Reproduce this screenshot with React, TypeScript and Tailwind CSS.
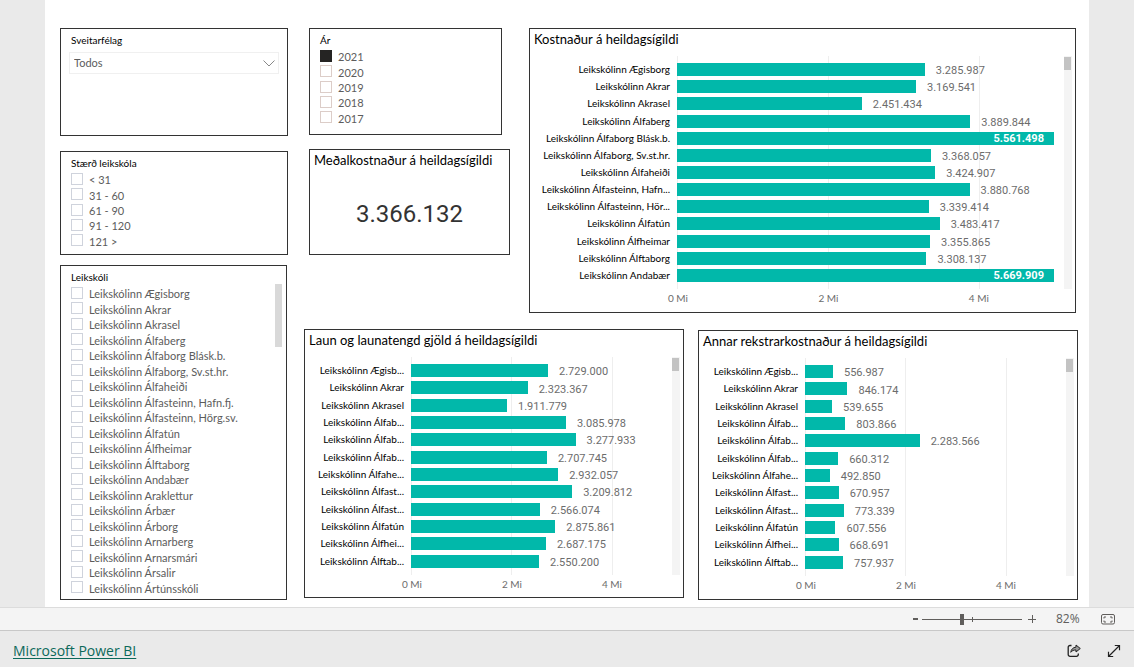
import React, { FC } from 'react';

interface IRow {
  label: string,
  value: number,
}

type TypeSlicer = {
  title: string
  options: string[],
  checked?: string,
  listClass: string,
  boxClass?: string,
  className?: string,
  scroll?: boolean
};

type TypeChart = {
  title: string
  rows: IRow[],
  labelClass: string,
  rowsClass: string,
  className?: string,
};

const AXIS_MAX = 5000000;

const sizes = ['< 31', '31 - 60', '61 - 90', '91 - 120', '121 >'];
const years = ['2021', '2020', '2019', '2018', '2017'];
const schools = [
  'Leikskólinn Ægisborg',
  'Leikskólinn Akrar',
  'Leikskólinn Akrasel',
  'Leikskólinn Álfaberg',
  'Leikskólinn Álfaborg Blásk.b.',
  'Leikskólinn Álfaborg, Sv.st.hr.',
  'Leikskólinn Álfaheiði',
  'Leikskólinn Álfasteinn, Hafn.fj.',
  'Leikskólinn Álfasteinn, Hörg.sv.',
  'Leikskólinn Álfatún',
  'Leikskólinn Álfheimar',
  'Leikskólinn Álftaborg',
  'Leikskólinn Andabær',
  'Leikskólinn Araklettur',
  'Leikskólinn Árbær',
  'Leikskólinn Árborg',
  'Leikskólinn Arnarberg',
  'Leikskólinn Arnarsmári',
  'Leikskólinn Ársalir',
  'Leikskólinn Ártúnsskóli',
];

const totalCost: IRow[] = [
  { label: 'Leikskólinn Ægisborg', value: 3285987 },
  { label: 'Leikskólinn Akrar', value: 3169541 },
  { label: 'Leikskólinn Akrasel', value: 2451434 },
  { label: 'Leikskólinn Álfaberg', value: 3889844 },
  { label: 'Leikskólinn Álfaborg Blásk.b.', value: 5561498 },
  { label: 'Leikskólinn Álfaborg, Sv.st.hr.', value: 3368057 },
  { label: 'Leikskólinn Álfaheiði', value: 3424907 },
  { label: 'Leikskólinn Álfasteinn, Hafn...', value: 3880768 },
  { label: 'Leikskólinn Álfasteinn, Hör...', value: 3339414 },
  { label: 'Leikskólinn Álfatún', value: 3483417 },
  { label: 'Leikskólinn Álfheimar', value: 3355865 },
  { label: 'Leikskólinn Álftaborg', value: 3308137 },
  { label: 'Leikskólinn Andabær', value: 5669909 },
];

const shortLabels = [
  'Leikskólinn Ægisb...',
  'Leikskólinn Akrar',
  'Leikskólinn Akrasel',
  'Leikskólinn Álfab...',
  'Leikskólinn Álfab...',
  'Leikskólinn Álfab...',
  'Leikskólinn Álfahe...',
  'Leikskólinn Álfast...',
  'Leikskólinn Álfast...',
  'Leikskólinn Álfatún',
  'Leikskólinn Álfhei...',
  'Leikskólinn Álftab...',
];

const toRows = (values: number[]): IRow[] => values.map((value, i) => ({ label: shortLabels[i], value }));

const wages = toRows([
  2729000, 2323367, 1911779, 3085978, 3277933, 2707745,
  2932057, 3209812, 2566074, 2875861, 2687175, 2550200,
]);
const otherCost = toRows([
  556987, 846174, 539655, 803866, 2283566, 660312,
  492850, 670957, 773339, 607556, 668691, 757937,
]);

const formatValue = (value: number) => String(value).replace(/\B(?=(\d{3})+$)/g, '.');

const Slicer: FC<TypeSlicer> = ({
  title, options, checked, listClass, boxClass = 'border-[#cfd3dc]', className = '', scroll,
}: TypeSlicer) => (
  <fieldset className={`relative border border-[#333] bg-white pl-[10px] ${className}`}>
    <legend className="float-left h-5 w-full pt-[3px] text-[10px] leading-4 text-black">{title}</legend>
    <div className={`clear-both flex flex-col ${listClass}`}>
      {options.map((e) => (
        <label key={e} className="flex min-h-0 flex-1 items-center gap-[6px] text-[11px] leading-[15px] text-[#5c5c5c]">
          <input
            type="checkbox"
            defaultChecked={e === checked}
            className={`mb-[2px] size-3 shrink-0 appearance-none border bg-white checked:border-[#252423] checked:bg-[#252423] ${boxClass}`}
          />
          {e}
        </label>
      ))}
    </div>
    {scroll && <div className="absolute top-[18px] right-1 h-[63px] w-[7px] bg-[#d9d9d9]" />}
  </fieldset>
);

const BarChart: FC<TypeChart> = ({
  title, rows, labelClass, rowsClass, className = '',
}: TypeChart) => (
  <section className={`border border-[#333] bg-white pr-[3px] ${className}`}>
    <h2 className="h-[27px] pl-1 text-[13px] leading-5 text-black">{title}</h2>
    <div className="flex">
      <div className={`shrink-0 pt-[5px] pr-[7px] ${labelClass}`}>
        <div className={`flex flex-col ${rowsClass}`}>
          {rows.map((e, i) => (
            <div key={i} className="flex min-h-0 flex-1 items-center justify-end text-[10px] leading-[15px] whitespace-nowrap text-black">
              {e.label}
            </div>
          ))}
        </div>
      </div>
      <div className="relative min-w-0 flex-1 py-[5px]">
        <div className="absolute inset-y-0 left-0 w-px bg-[#eee]" />
        <div className="absolute inset-y-0 left-[40%] w-px bg-[#eee]" />
        <div className="absolute inset-y-0 left-[80%] w-px bg-[#eee]" />
        <div className={`relative flex flex-col ${rowsClass}`}>
          {rows.map((e, i) => {
            const over = e.value > AXIS_MAX;
            return (
              <div key={i} className="flex min-h-0 flex-1 items-center">
                <div
                  className="flex h-[13px] shrink-0 items-center justify-end bg-[#01b8aa]"
                  style={{ width: `${Math.min(e.value / AXIS_MAX, 1) * 100}%` }}
                >
                  {over && (
                    <span className="pt-px pr-[10px] font-['Roboto',sans-serif] text-[11px] leading-4 font-bold text-white">{formatValue(e.value)}</span>
                  )}
                </div>
                {!over && (
                  <span className="pt-[3px] pl-[11px] font-['Roboto',sans-serif] text-[11px] leading-4 text-[#6c6c6c]">{formatValue(e.value)}</span>
                )}
              </div>
            );
          })}
        </div>
      </div>
      <div className="ml-[10px] w-2 bg-[#f4f4f4] pt-px">
        <div className="h-[13px] w-[7px] bg-[#c3c3c3]" />
      </div>
    </div>
    <div className="flex h-[17px]">
      <div className={`shrink-0 ${labelClass}`} />
      <div className="relative mr-[18px] ml-px flex-1 text-[10px] leading-[18px] text-[#6c6c6c]">
        <span className="absolute left-0 -translate-x-1/2 whitespace-nowrap">0 Mi</span>
        <span className="absolute left-[40%] -translate-x-1/2 whitespace-nowrap">2 Mi</span>
        <span className="absolute left-[80%] -translate-x-1/2 whitespace-nowrap">4 Mi</span>
      </div>
    </div>
  </section>
);

const ZoomBar: FC = () => (
  <div className="flex h-6 items-center justify-end border-y border-t-[#dcdcdc] border-b-[#c8c8c8] bg-[#f4f4f4] pr-[18px] text-[#605e5c]">
    <button type="button" aria-label="Zoom out" className="flex h-4 w-[9px] items-center">
      <span className="h-[2px] w-[5px] bg-[#605e5c]" />
    </button>
    <div className="relative flex w-[100px] items-center">
      <div className="absolute left-[50px] h-[5px] w-px bg-[#605e5c]" />
      <input
        type="range"
        aria-label="Zoom"
        defaultValue={40}
        className="relative h-[11px] w-full appearance-none bg-[linear-gradient(#605e5c,#605e5c)] bg-[length:100%_1px] bg-center bg-no-repeat [&::-webkit-slider-thumb]:h-[11px] [&::-webkit-slider-thumb]:w-1 [&::-webkit-slider-thumb]:appearance-none [&::-webkit-slider-thumb]:bg-[#605e5c]"
      />
    </div>
    <button type="button" aria-label="Zoom in" className="ml-[6px]">
      <svg width="8" height="8" viewBox="0 0 8 8" stroke="#605e5c" shapeRendering="crispEdges">
        <path d="M0 4.5h8M4.5 0v8" />
      </svg>
    </button>
    <span className="ml-5 w-[25px] font-['Open_Sans',sans-serif] text-[12px]">82%</span>
    <button type="button" aria-label="Fit to page" className="ml-5">
      <svg width="15" height="11" viewBox="0 0 15 11" fill="none" stroke="#605e5c">
        <rect x="0.5" y="0.5" width="13" height="9.5" rx="1.5" />
        <path d="M3 4.500V3H5M9 3H11V4.500M3 6.500V8H5M9 8H11V6.500" />
      </svg>
    </button>
  </div>
);

const Footer: FC = () => (
  <footer className="flex h-9 items-center justify-between bg-[#eaeaea] pt-1 pr-[13px] pl-[13px]">
    <a href="#powerbi" className="font-['Open_Sans',sans-serif] text-[14px] leading-5 text-[#0c695a] underline underline-offset-2">Microsoft Power BI</a>
    <div className="flex items-center gap-[26px]">
      <button type="button" aria-label="Share">
        <svg width="14" height="14" viewBox="0 0 14 14" fill="none" stroke="#222" strokeLinejoin="round">
          <path d="M4.500 1.500H3A1.800 1.800 0 0 0 1.200 3.300V10.500A1.800 1.800 0 0 0 3 12.300H9.500A1.800 1.800 0 0 0 11.300 10.500V9.500" strokeWidth="1.300" />
          <path d="M9 1L13.300 4.500L9 8V6C6.500 5.900 5 6.700 3.800 8.300C4 5.500 6 3.400 9 3.100Z" fill="#999" />
        </svg>
      </button>
      <button type="button" aria-label="Full screen">
        <svg width="14" height="14" viewBox="0 0 14 14" fill="none" stroke="#222" strokeWidth="1.200">
          <path d="M1.500 12.500L12.500 1.500M7.800 1.500H12.500V6.200M1.500 7.800V12.500H6.200" />
        </svg>
      </button>
    </div>
  </footer>
);

const App: FC = () => (
  <div className="flex min-h-screen flex-col bg-[#eaeaea] font-['Lato',sans-serif]">
    <main className="mx-[45px] flex flex-1 items-start gap-4 bg-white pt-7 pr-[11px] pb-[7px] pl-[15px]">
      <div className="flex w-[228px] shrink-0 flex-col">
        <section className="min-h-[108px] border border-[#333] px-2">
          <label htmlFor="municipality" className="block h-[23px] pt-[3px] pl-[2px] text-[10px] leading-4 text-black">Sveitarfélag</label>
          <div className="relative">
            <select
              id="municipality"
              className="block h-[22px] w-full appearance-none border border-[#f0f0f0] bg-white pt-px pl-1 text-[11px] text-[#5c5c5c]"
            >
              <option>Todos</option>
            </select>
            <svg className="pointer-events-none absolute top-2 right-1" width="12" height="7" viewBox="0 0 12 7" fill="none" stroke="#888">
              <path d="M0.500 0.500L6 6L11.500 0.500" />
            </svg>
          </div>
        </section>
        <Slicer title="Stærð leikskóla" options={sizes} listClass="h-[77px]" className="mt-[15px] pb-[5px]" />
        <Slicer title="Leikskóli" options={schools} listClass="h-[310px]" className="mt-[10px] mr-px pb-[3px]" scroll />
      </div>

      <div className="flex min-w-0 flex-1 flex-col gap-4">
        <div className="flex items-start gap-[19px] pr-[2px] pl-[5px]">
          <div className="flex w-[201px] shrink-0 flex-col gap-[14px]">
            <Slicer
              title="Ár"
              options={years}
              checked="2021"
              listClass="h-[77px]"
              boxClass="border-[#dccdc8]"
              className="mr-2 pb-2"
            />
            <section className="min-h-[106px] border border-[#333]">
              <h2 className="pl-1 text-[13px] leading-5 whitespace-nowrap text-black">Meðalkostnaður á heildagsígildi</h2>
              <p className="pt-[26px] text-center font-['Roboto',sans-serif] text-[24px] leading-9 text-[#333]">3.366.132</p>
            </section>
          </div>
          <BarChart
            title="Kostnaður á heildagsígildi"
            rows={totalCost}
            labelClass="w-[147px]"
            rowsClass="h-[223px]"
            className="min-w-0 flex-1 pb-[6px]"
          />
        </div>
        <div className="flex items-start gap-[14px]">
          <BarChart
            title="Laun og launatengd gjöld á heildagsígildi"
            rows={wages}
            labelClass="w-[106px]"
            rowsClass="h-[208px]"
            className="min-w-0 flex-1 pb-[5px]"
          />
          <BarChart
            title="Annar rekstrarkostnaður á heildagsígildi"
            rows={otherCost}
            labelClass="w-[106px]"
            rowsClass="h-[208px]"
            className="mt-px min-w-0 flex-1 pb-[6px]"
          />
        </div>
      </div>
    </main>
    <ZoomBar />
    <Footer />
  </div>
);

export default App;
